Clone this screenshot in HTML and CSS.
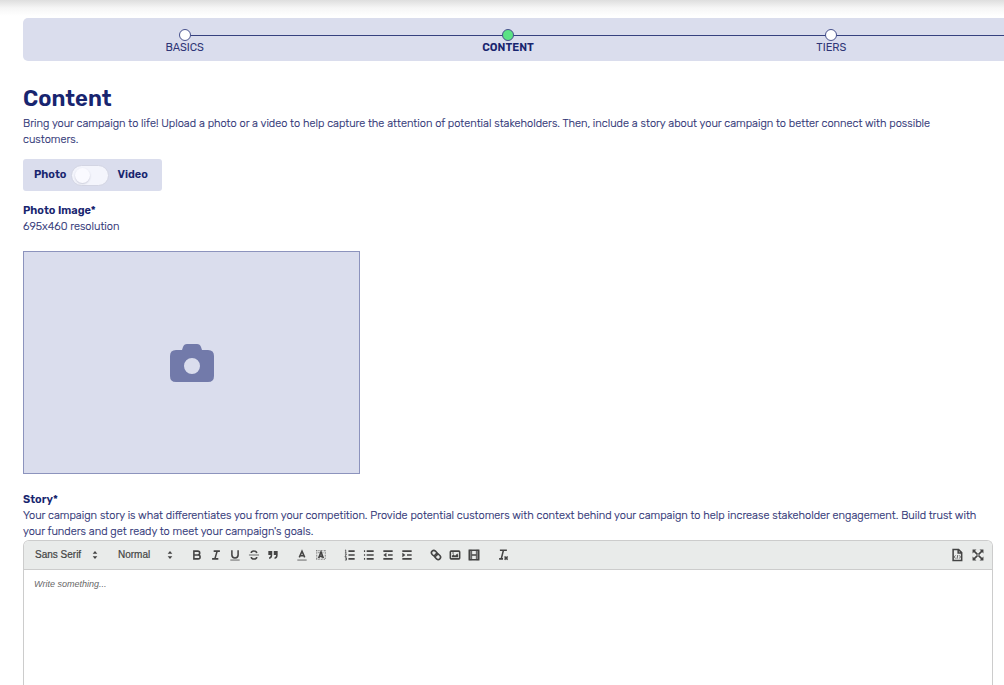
FILE: index.html
```html
<!DOCTYPE html>
<html lang="en">
<head>
<meta charset="utf-8">
<meta name="viewport" content="width=device-width, initial-scale=1">
<title>Content</title>
<link rel="stylesheet" href="styles.css">
</head>
<body>
<main class="page">
  <ol class="stepper">
    <li class="step"><span class="dot"></span>BASICS</li>
    <li class="step step-current" aria-current="step"><span class="dot"></span>CONTENT</li>
    <li class="step"><span class="dot"></span>TIERS</li>
  </ol>

  <div class="content">
    <h1 class="title">Content</h1>
    <p class="text intro">Bring your campaign to life! Upload a photo or a video to help capture the attention of potential stakeholders. Then, include a story about your campaign to better connect with possible customers.</p>

    <div class="media-toggle">
      <label for="media">Photo</label>
      <input class="switch" type="checkbox" role="switch" id="media">
      <label for="media">Video</label>
    </div>

    <section class="photo">
      <h2 class="field-label">Photo Image*</h2>
      <p class="text">695x460 resolution</p>
      <button class="upload" type="button" aria-label="Upload photo">
        <svg class="camera" viewBox="0 0 44 38"><path fill-rule="evenodd" d="M6 6h6l1-3q1-3 4-3h10q3 0 4 3l1 3h6q6 0 6 6v20q0 6-6 6H6q-6 0-6-6V12q0-6 6-6ZM22 14a8 8 0 1 0 0 16 8 8 0 0 0 0-16Z"/></svg>
      </button>
    </section>

    <section class="story">
      <label class="field-label" for="story">Story*</label>
      <p class="text">Your campaign story is what differentiates you from your competition. Provide potential customers with context behind your campaign to help increase stakeholder engagement. Build trust with your funders and get ready to meet your campaign's goals.</p>
      <div class="editor">
        <div class="toolbar">
          <div class="picker">
            <select class="picker-font" aria-label="Font"><option>Sans Serif</option></select>
            <svg class="icon" viewBox="0 0 18 18"><path class="fill" d="M6 7.500h6L9 4ZM6 10.500h6L9 14Z"/></svg>
          </div>
          <div class="picker">
            <select class="picker-size" aria-label="Size"><option>Normal</option></select>
            <svg class="icon" viewBox="0 0 18 18"><path class="fill" d="M6 7.500h6L9 4ZM6 10.500h6L9 14Z"/></svg>
          </div>
          <div class="group">
            <button type="button" class="tool" aria-label="Bold"><svg class="icon" viewBox="0 0 18 18"><path d="M5 4h5a2.500 2.500 0 0 1 0 5H5ZM5 9h5.500a2.500 2.500 0 0 1 0 5H5Z"/></svg></button>
            <button type="button" class="tool" aria-label="Italic"><svg class="icon" viewBox="0 0 18 18"><path d="M6 4h8M4 14h8M10.500 4l-3 10"/></svg></button>
            <button type="button" class="tool" aria-label="Underline"><svg class="icon" viewBox="0 0 18 18"><path d="M5 3v6c0 5 8 5 8 0V3"/><path class="thin" d="M3 15.500h12"/></svg></button>
            <button type="button" class="tool" aria-label="Strike"><svg class="icon" viewBox="0 0 18 18"><path d="M12.500 6.500C12 3 5.500 3 5.500 6.500M5.500 11.500c0 3.500 7 3.500 7 0"/><path class="thin" d="M2.500 9h13"/></svg></button>
            <button type="button" class="tool" aria-label="Quote"><svg class="icon" viewBox="0 0 18 18"><path class="fill" d="M3 4h5v5c0 3-1 4.500-4 5v-2c1-.5 2-1 2-3H3ZM10 4h5v5c0 3-1 4.500-4 5v-2c1-.5 2-1 2-3h-3Z"/></svg></button>
          </div>
          <div class="group">
            <button type="button" class="tool" aria-label="Text color"><svg class="icon" viewBox="0 0 18 18"><path d="m5.500 12 3.500-8 3.500 8M6.500 10h5"/><path class="thin" d="M3 15.500h12"/></svg></button>
            <button type="button" class="tool" aria-label="Background color"><svg class="icon" viewBox="0 0 18 18"><path class="dots" d="M3 3.500h12M3 14.500h12M3.500 3v12M14.500 3v12M5 6h8M5 12h8"/><path d="M6 13 9 5l3 8M7 10.500h4"/></svg></button>
          </div>
          <div class="group">
            <button type="button" class="tool" aria-label="Ordered list"><svg class="icon" viewBox="0 0 18 18"><path d="M7 4h8M7 9h8M7 14h8"/><path class="thin" d="m2.500 3 1-.5v4M2.500 6.500h2M2.500 8h2l-2 3h2M2.500 12.500h2v3h-2M3 14h1.500"/></svg></button>
            <button type="button" class="tool" aria-label="Bullet list"><svg class="icon" viewBox="0 0 18 18"><path d="M6 4h9M6 9h9M6 14h9M2.500 4H4M2.500 9H4M2.500 14H4"/></svg></button>
            <button type="button" class="tool" aria-label="Outdent"><svg class="icon" viewBox="0 0 18 18"><path d="M3 4h12M9 9h6M3 14h12"/><path class="fill" d="M7 6v6L3 9Z"/></svg></button>
            <button type="button" class="tool" aria-label="Indent"><svg class="icon" viewBox="0 0 18 18"><path d="M3 4h12M9 9h6M3 14h12"/><path class="fill" d="M3 6v6l4-3Z"/></svg></button>
          </div>
          <div class="group">
            <button type="button" class="tool" aria-label="Link"><svg class="icon" viewBox="0 0 18 18"><g transform="rotate(45 9 9)"><rect x="2" y="6" width="8" height="6" rx="3"/><rect x="8" y="6" width="8" height="6" rx="3"/></g></svg></button>
            <button type="button" class="tool" aria-label="Image"><svg class="icon" viewBox="0 0 18 18"><rect x="3" y="4" width="12" height="10" rx="1"/><path class="fill" d="M5 12v-2l2-2 2 2 3-3 1 2v3Z"/><circle class="fill" cx="6.500" cy="6.500" r="1"/></svg></button>
            <button type="button" class="tool" aria-label="Video"><svg class="icon" viewBox="0 0 18 18"><path fill="#888" d="M3 3h3v12H3ZM12 3h3v12h-3Z" stroke-width="1"/><path d="M3 3h12v12H3ZM6 9h6"/></svg></button>
          </div>
          <div class="group">
            <button type="button" class="tool" aria-label="Clear formatting"><svg class="icon" viewBox="0 0 18 18"><path d="M5 3h9M9.500 3 7 13M4 14h5M11 11l4 4M15 11l-4 4"/></svg></button>
          </div>
          <div class="group group-end">
            <button type="button" class="tool" aria-label="HTML source"><svg class="icon" viewBox="0 0 18 18"><path d="M4 2h7l4 4v10H4ZM10.500 2v4.500H15"/><path class="thin" d="M7 9.500 5.500 11.500 7 13.500M12 9.500l1.500 2-1.500 2M10 9l-1 5"/></svg></button>
            <button type="button" class="tool" aria-label="Full screen"><svg class="icon" viewBox="0 0 18 18"><path d="m4 4 10 10M14 4 4 14"/><path class="fill" d="M2 2h5L2 7ZM16 2v5l-5-5ZM2 16v-5l5 5ZM16 16h-5l5-5Z"/><circle class="gap" cx="9" cy="9" r="1"/></svg></button>
          </div>
        </div>
        <textarea class="story-input" id="story" placeholder="Write something..."></textarea>
      </div>
    </section>
  </div>
</main>
</body>
</html>
```
FILE: styles.css
```css
:root {
  --navy: #18256f;
  --text: #2f3576;
  --panel: #dadded;
  --ink: #444;
}

* { box-sizing: border-box; }

body {
  margin: 0;
  background: #fff;
  color: var(--text);
  font: 300 11px/16px Rubik, Inter, "Liberation Sans", sans-serif;
}

.page {
  display: flex;
  flex-direction: column;
  height: 100vh;
  padding: 18px 0 0 23px;
  overflow: hidden;
  background: linear-gradient(#dedede, #f6f6f6 8px, #fff 16px) top / 100% 16px no-repeat;
}

.stepper {
  flex: none;
  display: grid;
  grid-template-columns: repeat(3, 1fr);
  margin: 0;
  padding: 11px 11px 6px 0;
  list-style: none;
  background: var(--panel);
  border-radius: 5px 0 0 5px;
  font-weight: 400;
}

.step {
  position: relative;
  display: flex;
  flex-direction: column;
  align-items: center;
  height: 26px;
  line-height: 14px;
}

.step::before {
  content: "";
  position: absolute;
  top: 6px;
  left: 0;
  right: 0;
  height: 1px;
  background: #36417f;
}

.step:first-child::before { left: 50%; }
.step:last-child::before { right: -11px; }

.step-current { color: var(--navy); font-weight: 600; }

.dot {
  position: relative;
  flex: none;
  width: 12px;
  height: 12px;
  background: #fff;
  border: 1px solid #46508c;
  border-radius: 50%;
}

.step-current .dot { background: #5be284; }

.content {
  flex: 1;
  min-height: 0;
  display: flex;
  flex-direction: column;
  padding: 25px 11px 0 0;
}

.title {
  margin: 0 0 5px;
  color: var(--navy);
  font-size: 22px;
  line-height: 25px;
  font-weight: 600;
}

.text {
  margin: 0;
  -webkit-text-stroke: 0.2px var(--text);
}

.intro { padding-right: 16px; }

.media-toggle {
  align-self: flex-start;
  display: flex;
  flex: none;
  align-items: center;
  gap: 5px;
  height: 32px;
  margin-top: 11px;
  padding: 0 14px 0 11px;
  background: var(--panel);
  border-radius: 3px;
  color: var(--navy);
  font-weight: 600;
}

.switch {
  appearance: none;
  display: flex;
  align-items: center;
  width: 38px;
  height: 21px;
  margin: 0 3px 0 0;
  padding: 0 3px;
  background: #f4f5fc;
  border: 1px solid #d3d5e3;
  border-radius: 11px;
}

.switch::before {
  content: "";
  width: 15px;
  height: 15px;
  border-radius: 50%;
  background: #fafaff;
  box-shadow: 0 1px 2px #c9cbd9;
}

.switch:checked { justify-content: flex-end; }

.photo { flex: none; margin-top: 12px; }

.field-label {
  display: block;
  margin: 0;
  color: var(--navy);
  font-size: 11px;
  line-height: 16px;
  font-weight: 600;
}

.upload {
  display: grid;
  place-items: center;
  width: 100%;
  max-width: 337px;
  aspect-ratio: 337 / 223;
  margin-top: 16px;
  padding: 0;
  background: var(--panel);
  border: 1px solid #8c93bd;
}

.camera { width: 44px; fill: #727aaa; }

.story {
  flex: 1;
  min-height: 0;
  display: flex;
  flex-direction: column;
  margin-top: 18px;
}

.editor {
  flex: 1;
  min-height: 0;
  display: flex;
  flex-direction: column;
  border: 1px solid #ccc;
  border-bottom: 0;
  border-radius: 6px 6px 0 0;
  overflow: hidden;
}

.toolbar {
  flex: none;
  display: flex;
  align-items: center;
  gap: 10px;
  height: 29px;
  padding: 0 5px 0 11px;
  background: #e9ebea;
  border-bottom: 1px solid #ccc;
}

.picker { display: flex; align-items: center; }
.picker:first-child { margin-right: 6px; }

.picker select {
  appearance: none;
  padding: 0;
  border: 0;
  background: none;
  color: var(--ink);
  font: 10px/16px "Liberation Sans", Arial, sans-serif;
  -webkit-text-stroke: 0.2px var(--ink);
}

.picker-font { width: 53px; }
.picker-size { width: 45px; }

.group { display: flex; }
.group-end { margin-left: auto; gap: 2px; }

.tool {
  display: grid;
  place-items: center;
  width: 19px;
  height: 19px;
  padding: 0;
  border: 0;
  background: none;
}

.icon {
  width: 14px;
  height: 14px;
  fill: none;
  stroke: var(--ink);
  stroke-width: 2;
}

.icon .thin { stroke-width: 1; }
.icon .fill { fill: var(--ink); stroke: none; }
.icon .dots { stroke-width: 1; stroke-dasharray: 1 1; }
.icon .gap { fill: #e9ebea; stroke: none; }

.story-input {
  flex: 1;
  min-height: 0;
  width: 100%;
  padding: 8px 10px;
  border: 0;
  outline: 0;
  resize: none;
  color: var(--ink);
  font: 11px/13px "Liberation Sans", Arial, sans-serif;
}

.story-input::placeholder {
  color: #686868;
  font-size: 9px;
  font-style: italic;
}
```
